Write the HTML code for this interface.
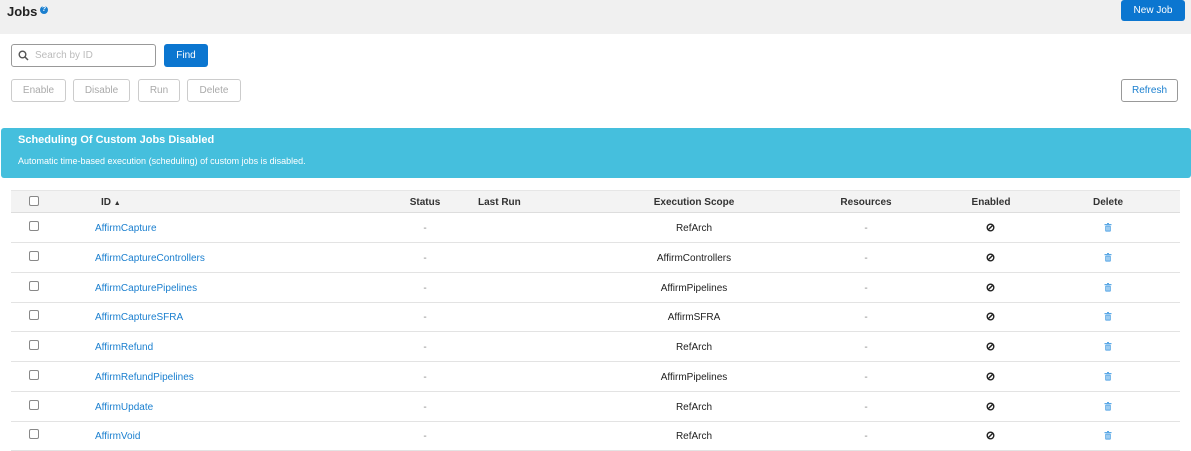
<!DOCTYPE html>
<html><head><style>
*{box-sizing:border-box}
body{margin:0;width:1191px;height:444px;overflow:hidden;background:#fff;font-family:"Liberation Sans",sans-serif;font-size:10px;color:#333;position:relative}
.a{position:absolute}
.top{left:0;top:0;width:1191px;height:34px;background:#f0f0f0}
.btn{position:absolute;border:1px solid #ccc;border-radius:3px;text-align:center;font-size:10px;color:#aaa;background:#fff}
.hdr{left:11px;top:190px;width:1169px;height:23px;background:#f3f3f3;border-bottom:1px solid #ddd;border-top:1px solid #e6e6e6}
.row{position:absolute;left:11px;width:1169px;height:30px;border-bottom:1px solid #e3e3e3}
.cb{position:absolute;left:18px;width:10px;height:10px;border:1px solid #888;border-radius:2px;background:#fff}
.c{position:absolute;transform:translateX(-50%);white-space:nowrap}
.lnk{position:absolute;left:84px;color:#1a7fcf}
</style></head><body>
<div class="a top"></div>
<div class="a" style="left:7px;top:4px;font-size:13px;font-weight:bold;color:#222">Jobs</div>
<div class="a" style="left:40px;top:6px;width:8px;height:8px;border-radius:50%;background:#1a7fcf;color:#fff;font-size:7px;line-height:8px;text-align:center;font-weight:bold">?</div>
<div class="a" style="left:1121px;top:0;width:64px;height:21px;background:#0b76d0;border-radius:3px;color:#fff;text-align:center;line-height:22px;font-size:10px">New Job</div>
<div class="a" style="left:11px;top:44px;width:145px;height:23px;border:1px solid #999;border-radius:3px"></div>
<svg class="a" style="left:18px;top:50px" width="11" height="11" viewBox="0 0 11 11"><circle cx="4.5" cy="4.5" r="3.3" fill="none" stroke="#555" stroke-width="1.4"/><line x1="7" y1="7" x2="10" y2="10" stroke="#555" stroke-width="1.5"/></svg>
<div class="a" style="left:35px;top:50px;color:#bbb">Search by ID</div>
<div class="a" style="left:164px;top:44px;width:44px;height:23px;background:#0b76d0;border-radius:3px;color:#fff;text-align:center;line-height:24px">Find</div>
<div class="btn" style="left:11px;top:79px;width:55px;height:23px;line-height:22px">Enable</div>
<div class="btn" style="left:73px;top:79px;width:57px;height:23px;line-height:22px">Disable</div>
<div class="btn" style="left:138px;top:79px;width:42px;height:23px;line-height:22px">Run</div>
<div class="btn" style="left:187px;top:79px;width:54px;height:23px;line-height:22px">Delete</div>
<div class="btn" style="left:1121px;top:79px;width:57px;height:23px;line-height:22px;color:#1a7fcf;border-color:#999">Refresh</div>
<div class="a" style="left:1px;top:128px;width:1190px;height:50px;background:#45bfdd;border-radius:3px"></div>
<div class="a" style="left:18px;top:134px;color:#fff;font-size:11px;font-weight:bold">Scheduling Of Custom Jobs Disabled</div>
<div class="a" style="left:18px;top:156px;color:#fff;font-size:9px">Automatic time-based execution (scheduling) of custom jobs is disabled.</div>
<div class="a hdr">
<div class="cb" style="top:5px"></div>
<div class="a" style="left:90px;top:6px;font-weight:bold">ID <span style="font-size:7px">▲</span></div>
<div class="c" style="left:414px;top:6px;font-weight:bold">Status</div>
<div class="a" style="left:467px;top:6px;font-weight:bold">Last Run</div>
<div class="c" style="left:683px;top:6px;font-weight:bold">Execution Scope</div>
<div class="c" style="left:855px;top:6px;font-weight:bold">Resources</div>
<div class="c" style="left:980px;top:6px;font-weight:bold">Enabled</div>
<div class="c" style="left:1097px;top:6px;font-weight:bold">Delete</div>
</div>
<div id="rows"></div>
<script>
var d=[["AffirmCapture","RefArch"],["AffirmCaptureControllers","AffirmControllers"],["AffirmCapturePipelines","AffirmPipelines"],["AffirmCaptureSFRA","AffirmSFRA"],["AffirmRefund","RefArch"],["AffirmRefundPipelines","AffirmPipelines"],["AffirmUpdate","RefArch"],["AffirmVoid","RefArch"]];
var h="";d.forEach(function(r,i){var t=213+i*29.75;
h+='<div class="row" style="top:'+t+'px"><div class="cb" style="top:8px"></div><div class="lnk" style="top:10px">'+r[0]+'</div><div class="c" style="left:414px;top:10px;color:#888">-</div><div class="c" style="left:683px;top:10px;color:#222">'+r[1]+'</div><div class="c" style="left:855px;top:10px;color:#888">-</div><svg class="a" style="left:975px;top:10px" width="9" height="9" viewBox="0 0 9 9"><circle cx="4.5" cy="4.5" r="3.3" fill="none" stroke="#222" stroke-width="1.4"/><line x1="2.2" y1="6.8" x2="6.8" y2="2.2" stroke="#222" stroke-width="1.4"/></svg><svg class="a" style="left:1093px;top:10px" width="8" height="9" viewBox="0 0 8 9"><rect x="0.5" y="1" width="7" height="1.2" fill="#5aa8e6"/><rect x="3" y="0" width="2" height="1" fill="#5aa8e6"/><rect x="1.2" y="2.6" width="5.6" height="6" rx="0.8" fill="#5aa8e6"/><rect x="2.6" y="3.6" width="0.8" height="4" fill="#fff"/><rect x="4.6" y="3.6" width="0.8" height="4" fill="#fff"/></svg></div>';});
document.getElementById("rows").innerHTML=h;
</script>
</body></html>
